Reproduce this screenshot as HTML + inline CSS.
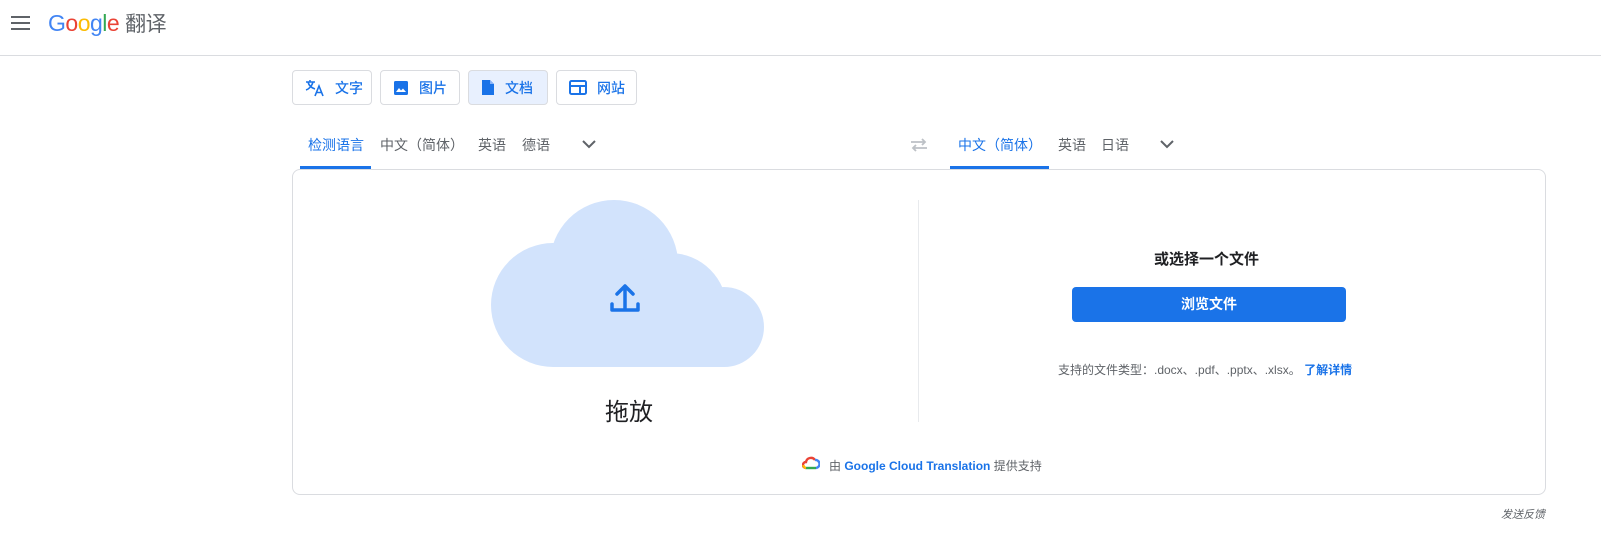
<!DOCTYPE html>
<html><head><meta charset="utf-8"><style>
*{margin:0;padding:0;box-sizing:border-box}
body{width:1601px;height:550px;background:#fff;font-family:"Liberation Sans","Noto Sans CJK SC",sans-serif;position:relative;overflow:hidden;color:#3c4043}
.a{position:absolute}
.hdr{left:0;top:0;width:1601px;height:56px;border-bottom:1px solid #dadce0}
.btn{top:70px;height:35px;border:1px solid #dadce0;border-radius:4px;font-size:14px;color:#1a73e8;display:flex;align-items:center;padding-left:12px;gap:10px;font-weight:500}
.tab{top:135px;font-size:14px;color:#5f6368}
.card{left:292px;top:169px;width:1254px;height:326px;border:1px solid #dadce0;border-radius:8px}
</style></head><body>
<div class="a hdr"></div>
<svg class="a" style="left:11px;top:15px" width="20" height="16"><rect y="1" width="19" height="2" fill="#5f6368"/><rect y="7" width="19" height="2" fill="#5f6368"/><rect y="13" width="19" height="2" fill="#5f6368"/></svg>
<div class="a" style="left:48px;top:8px;font-size:23px;letter-spacing:-0.5px"><span style="color:#4285f4">G</span><span style="color:#ea4335">o</span><span style="color:#fbbc05">o</span><span style="color:#4285f4">g</span><span style="color:#34a853">l</span><span style="color:#ea4335">e</span> <span style="color:#5f6368;font-size:21px">翻译</span></div>

<div class="a btn" style="left:292px;width:80px"><svg width="20" height="18" viewBox="0 0 20 18"><path d="M1 3h9M5 1v2M3 3c1 4 4 6 7 7M8 3c-1 4-4 7-7 8" stroke="#1a73e8" stroke-width="1.6" fill="none"/><path d="M10 17l4-10 4 10M11.5 13.5h5" stroke="#1a73e8" stroke-width="1.6" fill="none"/></svg>文字</div>
<div class="a btn" style="left:380px;width:80px"><svg width="16" height="16"><rect x="1" y="1" width="14" height="14" rx="1.5" fill="#1a73e8"/><path d="M3 12l3-4 2 2.5 2-2 3 3.5z" fill="#fff"/></svg>图片</div>
<div class="a btn" style="left:468px;width:80px;background:#e8f0fe"><svg width="14" height="17"><path d="M1 1h8l4 4v11H1z" fill="#1a73e8"/><path d="M9 1v4h4" fill="#8ab4f8"/></svg>文档</div>
<div class="a btn" style="left:556px;width:81px"><svg width="18" height="15"><rect x="1" y="1" width="16" height="13" rx="1.5" fill="none" stroke="#1a73e8" stroke-width="2"/><rect x="1" y="5" width="16" height="2" fill="#1a73e8"/><rect x="10" y="5" width="2" height="8" fill="#1a73e8"/></svg>网站</div>

<div class="a tab" style="left:308px;color:#1a73e8">检测语言</div>
<div class="a tab" style="left:380px">中文（简体）</div>
<div class="a tab" style="left:478px">英语</div>
<div class="a tab" style="left:522px">德语</div>
<svg class="a" style="left:581px;top:139px" width="16" height="10"><path d="M2 2l6 6 6-6" stroke="#5f6368" stroke-width="2" fill="none"/></svg>
<div class="a" style="left:300px;top:166px;width:71px;height:3px;background:#1a73e8"></div>

<svg class="a" style="left:909px;top:137px" width="20" height="16"><path d="M2 5h14M13 2l3 3-3 3M18 11H4M7 8l-3 3 3 3" stroke="#bdc1c6" stroke-width="1.8" fill="none"/></svg>
<div class="a tab" style="left:958px;color:#1a73e8">中文（简体）</div>
<div class="a tab" style="left:1058px">英语</div>
<div class="a tab" style="left:1101px">日语</div>
<svg class="a" style="left:1159px;top:139px" width="16" height="10"><path d="M2 2l6 6 6-6" stroke="#5f6368" stroke-width="2" fill="none"/></svg>
<div class="a" style="left:950px;top:166px;width:99px;height:3px;background:#1a73e8"></div>

<div class="a card"></div>
<div class="a" style="left:918px;top:200px;width:1px;height:222px;background:#e8eaed"></div>
<svg class="a" style="left:490px;top:200px" width="278" height="170"><g fill="#d2e3fc"><circle cx="124" cy="64" r="64"/><circle cx="63" cy="105" r="62"/><circle cx="180" cy="110" r="57"/><circle cx="234" cy="127" r="40"/><rect x="63" y="100" width="171" height="67"/></g><path d="M135 108v-22M127 94l8-8 8 8M122 104v6h26v-6" stroke="#1a73e8" stroke-width="3.5" fill="none" stroke-linecap="round" stroke-linejoin="round"/></svg>
<div class="a" style="left:605px;top:392px;font-size:24px;color:#202124">拖放</div>

<div class="a" style="left:1154px;top:248px;font-size:15px;font-weight:bold;color:#202124">或选择一个文件</div>
<div class="a" style="left:1072px;top:287px;width:274px;height:35px;background:#1a73e8;border-radius:4px;color:#fff;font-size:14px;font-weight:bold;text-align:center;line-height:35px">浏览文件</div>
<div class="a" style="left:1058px;top:361px;font-size:12px;color:#5f6368">支持的文件类型：.docx、.pdf、.pptx、.xlsx。 <span style="color:#1a73e8;font-weight:bold">了解详情</span></div>

<svg class="a" style="left:802px;top:456px" width="18" height="14"><path d="M4 12a3 3 0 0 1 0-6 5 5 0 0 1 9-2" stroke="#ea4335" stroke-width="2.4" fill="none"/><path d="M13 4a4 4 0 0 1 1 8" stroke="#4285f4" stroke-width="2.4" fill="none"/><path d="M4 12h10" stroke="#34a853" stroke-width="2.4"/><path d="M1.5 9a3 3 0 0 0 2.5 3" stroke="#fbbc05" stroke-width="2.4" fill="none"/></svg>
<div class="a" style="left:829px;top:457px;font-size:12px;color:#5f6368">由 <span style="color:#1a73e8;font-weight:bold">Google Cloud Translation</span> 提供支持</div>
<div class="a" style="left:1501px;top:506px;font-size:11px;color:#5f6368;font-style:italic">发送反馈</div>
</body></html>
